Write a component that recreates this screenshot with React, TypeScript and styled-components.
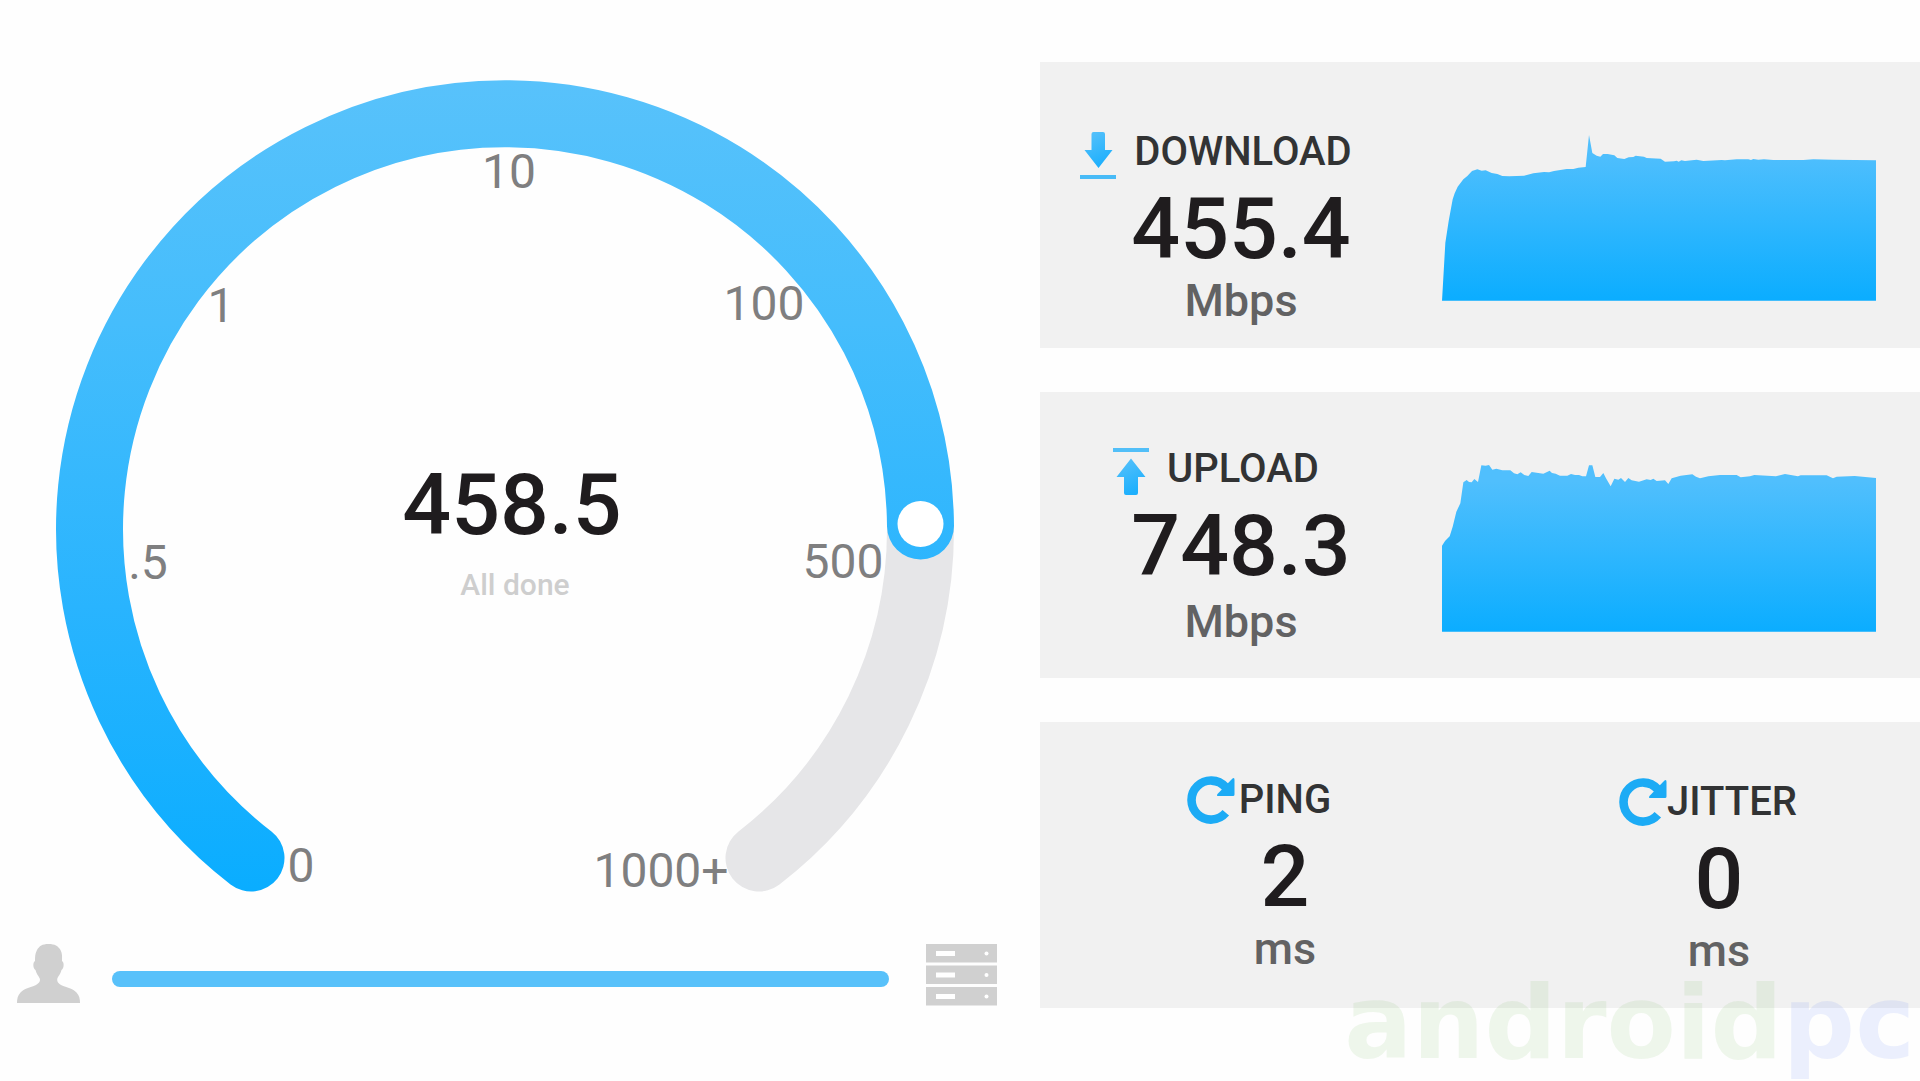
import React from "react";
import styled, { createGlobalStyle } from "styled-components";

const GlobalStyle = createGlobalStyle`
  *, *::before, *::after { box-sizing: border-box; }
  body {
    margin: 0;
    background: #fefefe;
    color: #1f1c1e;
    font-family: Roboto, "Liberation Sans", sans-serif;
    font-weight: 500;
  }
  h2, p { margin: 0; font: inherit; }
  svg { display: block; }
`;

const Page = styled.main`
  position: relative;
  display: grid;
  grid-template-columns: 13fr 11fr;
  min-height: 100vh;
  overflow: hidden;
`;

/* ---------- gauge side ---------- */

const GaugeSide = styled.section`
  display: flex;
  flex-direction: column;
  gap: 24px;
`;

const GaugeArea = styled.div`
  display: grid;
  > * { grid-area: 1 / 1; }
`;

const Dial = styled.svg`
  width: 100%;
  height: auto;
`;

const Tick = styled.text`
  fill: #7f7f80;
  font-size: 48px;
  font-weight: 400;
  text-anchor: middle;
`;

const Readout = styled.div`
  place-self: center;
  display: flex;
  flex-direction: column;
  align-items: center;
  padding: 146px 16px 0 0;
`;

const Speed = styled.p`
  font-size: 86px;
  line-height: 96px;
`;

const Status = styled.p`
  padding: 8px 0 0 6px;
  color: #cecece;
  font-size: 30px;
  line-height: 48px;
`;

const Connection = styled.div`
  display: flex;
  align-items: flex-start;
  padding: 0 43px 0 17px;
`;

const Link = styled.div`
  flex: 1;
  height: 16px;
  margin: 27px 37px 0 32px;
  border-radius: 8px;
  background: #58c1fa;
`;

/* ---------- results side ---------- */

const Results = styled.section`
  display: flex;
  flex-direction: column;
  gap: 44px;
  padding-top: 62px;
`;

const Panel = styled.article<{ $columns: string; $right: number }>`
  display: grid;
  grid-template-columns: ${(p) => p.$columns};
  align-items: start;
  min-height: 286px;
  padding-right: ${(p) => p.$right}px;
  background: #f1f1f1;
`;

const Metric = styled.div<{ $top: number }>`
  padding-top: ${(p) => p.$top}px;
  text-align: center;
`;

const MetricHead = styled.div<{ $gap: number; $shift?: number }>`
  display: grid;
  grid-template-columns: 1fr auto 1fr;
  column-gap: ${(p) => p.$gap}px;
  height: 48px;
  padding-left: ${(p) => p.$shift ?? 0}px;
  > svg { justify-self: end; }
`;

const Label = styled.h2`
  color: #323334;
  font-size: 40px;
  line-height: 48px;
`;

const Value = styled.p`
  padding-top: 5px;
  font-size: 86px;
  line-height: 96px;
`;

const Unit = styled.p<{ $gap?: number }>`
  padding-top: ${(p) => p.$gap ?? 0}px;
  color: #626263;
  font-size: 45px;
  line-height: 48px;
`;

const Graph = styled.svg`
  width: 100%;
  height: auto;
  margin-top: 73px;
`;

const Watermark = styled.div`
  position: absolute;
  right: 5px;
  bottom: 8px;
  color: rgba(95, 175, 65, 0.1);
  font-family: "DejaVu Sans", sans-serif;
  font-size: 101px;
  font-weight: 700;
  line-height: 100px;
  pointer-events: none;
`;

const WatermarkTail = styled.span`
  color: rgba(65, 105, 245, 0.1);
`;

/* ---------- drawings ---------- */

const ticks = [
  { text: "0", x: 301, y: 882 },
  { text: ".5", x: 148, y: 579 },
  { text: "1", x: 221, y: 322 },
  { text: "10", x: 509, y: 188 },
  { text: "100", x: 764, y: 320 },
  { text: "500", x: 843, y: 578 },
  { text: "1000+", x: 661, y: 887 },
];

function Gauge() {
  return (
    <Dial viewBox="0 0 1040 920" role="img" aria-label="Speed gauge">
      <defs>
        <linearGradient id="dial" gradientUnits="userSpaceOnUse" x1="0" y1="80" x2="0" y2="890">
          <stop offset="0" stopColor="#58c2fb" />
          <stop offset="0.3" stopColor="#45bdfc" />
          <stop offset="0.65" stopColor="#29b4fe" />
          <stop offset="1" stopColor="#0aadff" />
        </linearGradient>
      </defs>
      <g fill="none" strokeWidth="67" strokeLinecap="round">
        <path d="M920.500 526A415.500 415.500 0 0 1 759 858" stroke="#e6e6e8" />
        <path d="M251 858A415.500 415.500 0 1 1 920.500 526" stroke="url(#dial)" />
      </g>
      <circle cx="920.5" cy="524" r="23" fill="#fff" />
      {ticks.map((t) => (
        <Tick key={t.text} x={t.x} y={t.y}>{t.text}</Tick>
      ))}
    </Dial>
  );
}

function UserIcon() {
  return (
    <svg width="63" height="59" viewBox="0 0 63 59" fill="#d0d0d0" aria-hidden="true">
      <path d="M31.500 0C38 0 41 2 43.500 6C45.500 9.500 45 13 45 17C47.500 18 47 25 44.500 26C43.500 30 42 31 40.500 34C39.500 37 41 39 44 41C50 43.500 56 44.500 59.500 48.500C62.500 52 63 55 63 59H0C0 55 .5 52 3.500 48.500C7 44.500 13 43.500 19 41C22 39 24 37 22.500 34C21 31 19.500 30 18.500 26C16 25 15.500 18 18 17C18 13 18 9.500 20 6C22.500 2 25 0 31.500 0Z" />
    </svg>
  );
}

function ServerIcon() {
  return (
    <svg width="71" height="62" viewBox="0 0 71 62" aria-hidden="true">
      {[0, 21.5, 43].map((y) => (
        <g key={y} transform={`translate(0 ${y})`}>
          <path d="M0 0H71V18.500H0Z" fill="#d0d0d0" />
          <path d="M10 7H29V12H10Z" fill="#fff" />
          <circle cx="60.5" cy="9.5" r="2" fill="#fff" />
        </g>
      ))}
    </svg>
  );
}

function ArrowGradient({ id }: { id: string }) {
  return (
    <linearGradient id={id} x1="0" y1="0" x2="0.4" y2="1">
      <stop offset="0" stopColor="#5ac2fa" />
      <stop offset="1" stopColor="#1eb0fd" />
    </linearGradient>
  );
}

function DownloadIcon() {
  return (
    <svg width="36" height="52" viewBox="0 0 36 52" aria-hidden="true">
      <defs><ArrowGradient id="down" /></defs>
      <path d="M13.500 4H23Q25 4 25 6V22H32.500L18.500 40L4.500 22H11.500V6Q11.500 4 13.500 4Z" fill="url(#down)" />
      <path d="M0 47H36V51H0Z" fill="#48bbf7" />
    </svg>
  );
}

function UploadIcon() {
  return (
    <svg width="36" height="52" viewBox="0 0 36 52" aria-hidden="true">
      <defs><ArrowGradient id="up" /></defs>
      <path d="M0 3H36V7H0Z" fill="#52bff8" />
      <path d="M18 13.500L32.500 32H25V48Q25 50 23 50H13Q11 50 11 48V32H3.500Z" fill="url(#up)" />
    </svg>
  );
}

function CycleIcon() {
  return (
    <svg width="48" height="48" viewBox="0 0 48 48" aria-hidden="true">
      <path d="M38.500 11A19.500 19.500 0 1 0 38.800 36.800" fill="none" stroke="#1cabf5" strokeWidth="8.6" />
      <path d="M45.500 2.500Q47.500 1 47.500 4V18.500Q47.500 20 46 20H31.500Q29 20 30.500 18Z" fill="#1cabf5" />
    </svg>
  );
}

const downloadCurve =
  "66,544 76,370 86,305 98,240 104,222 113,202 130,180 142,170 156,155 172,150 185,154 197,153 215,161 232,164 247,170 268,171 312,169 340,162 372,158 387,159 402,155 440,149 460,149 475,145 497,143 507,47 517,101 530,109 541,112 549,104 563,104 583,108 592,116 613,119 626,114 640,113 647,109 672,112 680,116 722,118 735,127 762,126 770,124 776,127 784,123 795,125 830,121 850,125 905,122 915,123 950,120 985,120 993,122 1000,119 1015,121 1032,120 1060,122 1150,122 1180,120 1240,121 1368,123 1368,544";

const uploadCurve =
  "66,575 66,317 75,303 89,289 98,260 109,215 121,190 130,127 140,120 147,126 155,127 163,117 174,126 184,76 197,77 207,75 217,89 229,86 247,91 271,91 282,100 292,103 302,97 313,105 325,108 335,96 370,101 389,92 396,99 407,101 420,107 442,107 453,102 465,105 477,105 487,109 498,109 507,76 517,76 526,111 540,111 550,99 558,115 572,139 583,116 595,119 603,114 615,126 625,114 635,121 657,125 680,118 692,120 700,116 710,123 735,121 745,132 755,115 782,107 817,103 828,110 840,115 865,109 900,105 950,105 962,112 990,109 1003,105 1068,109 1095,102 1134,109 1142,106 1220,106 1239,115 1250,110 1304,108 1368,114 1368,575";

function SpeedGraph({ id, viewBox, curve, label }: { id: string; viewBox: string; curve: string; label: string }) {
  return (
    <Graph viewBox={viewBox} role="img" aria-label={label}>
      <defs>
        <linearGradient id={id} x1="0" y1="0" x2="0" y2="1">
          <stop offset="0.1" stopColor="#50bffd" />
          <stop offset="1" stopColor="#0badff" />
        </linearGradient>
      </defs>
      <polygon points={curve} fill={`url(#${id})`} />
    </Graph>
  );
}

export default function App() {
  return (
    <>
      <GlobalStyle />
      <Page>
        <GaugeSide>
          <GaugeArea>
            <Gauge />
            <Readout>
              <Speed>458.5</Speed>
              <Status>All done</Status>
            </Readout>
          </GaugeArea>
          <Connection>
            <UserIcon />
            <Link />
            <ServerIcon />
          </Connection>
        </GaugeSide>

        <Results>
          <Panel $columns="402px 1fr" $right={44}>
            <Metric $top={66}>
              <MetricHead $gap={18} $shift={4}>
                <DownloadIcon />
                <Label>DOWNLOAD</Label>
              </MetricHead>
              <Value>455.4</Value>
              <Unit>Mbps</Unit>
            </Metric>
            <SpeedGraph id="downloadFill" viewBox="66 47 1302 497" curve={downloadCurve} label="Download speed over time" />
          </Panel>

          <Panel $columns="402px 1fr" $right={44}>
            <Metric $top={53}>
              <MetricHead $gap={18} $shift={4}>
                <UploadIcon />
                <Label>UPLOAD</Label>
              </MetricHead>
              <Value>748.3</Value>
              <Unit $gap={4}>Mbps</Unit>
            </Metric>
            <SpeedGraph id="uploadFill" viewBox="66 75 1302 500" curve={uploadCurve} label="Upload speed over time" />
          </Panel>

          <Panel $columns="490px 1fr" $right={12}>
            <Metric $top={54}>
              <MetricHead $gap={4}>
                <CycleIcon />
                <Label>PING</Label>
              </MetricHead>
              <Value>2</Value>
              <Unit>ms</Unit>
            </Metric>
            <Metric $top={56}>
              <MetricHead $gap={0} $shift={26}>
                <CycleIcon />
                <Label>JITTER</Label>
              </MetricHead>
              <Value>0</Value>
              <Unit>ms</Unit>
            </Metric>
          </Panel>
        </Results>

        <Watermark aria-hidden="true">
          android<WatermarkTail>pc</WatermarkTail>
        </Watermark>
      </Page>
    </>
  );
}
